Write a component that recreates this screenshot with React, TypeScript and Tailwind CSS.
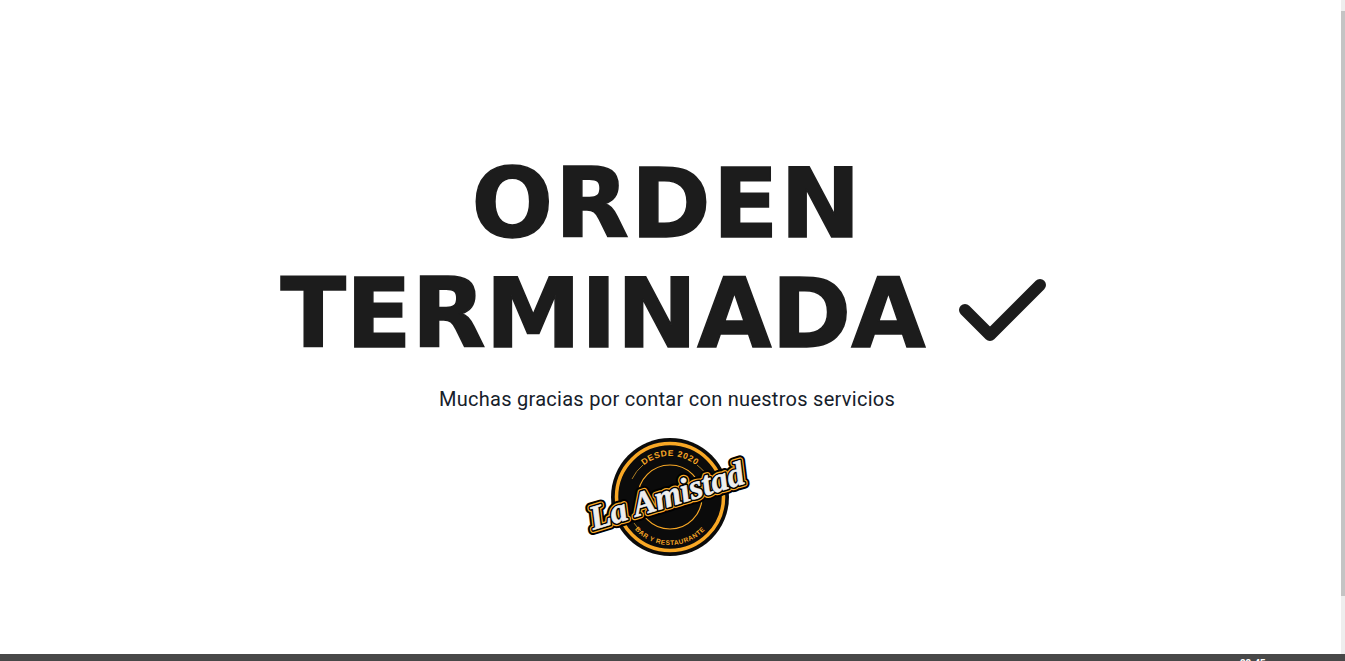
function Check() {
  return (
    <svg width="100" height="76" viewBox="0 0 100 76" className="mt-[5px] shrink-0">
      <path d="M12 31L37 56L87 6" fill="none" stroke="#1c1c1c" strokeWidth="12" strokeLinecap="round" strokeLinejoin="round" />
    </svg>
  );
}

const scriptProps = {
  x: 85,
  y: 72,
};

function Logo() {
  return (
    <svg width="170" height="124" viewBox="0 0 170 124">
      <defs>
        <path id="arcTop" d="M47 62A41 41 0 0 1 129 62" />
        <path id="arcBottom" d="M40 62A48 48 0 0 0 136 62" />
      </defs>
      {/* Badge */}
      <circle cx="88" cy="62" r="59" fill="#0b0b0b" />
      <circle cx="88" cy="62" r="53.5" fill="none" stroke="#f9a825" strokeWidth="3.5" />
      <circle cx="88" cy="62" r="32" fill="none" stroke="#f9a825" strokeWidth="1.2" />
      {/* Rules beside the curved lines */}
      <path d="M50 44A42 42 0 0 1 61 30M115 30A42 42 0 0 1 124 39" fill="none" stroke="#a87a22" strokeWidth="1" />
      <path d="M52 88A44 44 0 0 0 60 97" fill="none" stroke="#a87a22" strokeWidth="1" />
      <text fontFamily="'Liberation Sans', sans-serif" fontSize="8.5" fontWeight="700" fill="#f9a825" letterSpacing="0.6" textAnchor="middle">
        <textPath href="#arcTop" startOffset="50%">DESDE 2020</textPath>
      </text>
      <text fontFamily="'Liberation Sans', sans-serif" fontSize="6.5" fontWeight="700" fill="#f9a825" letterSpacing="0.5" textAnchor="middle">
        <textPath href="#arcBottom" startOffset="50%">BAR Y RESTAURANTE</textPath>
      </text>
      {/* Script name, layered strokes */}
      <g transform="rotate(-17 85 62)" fontFamily="'Liberation Serif', serif" fontStyle="italic" fontWeight="700" fontSize="34" textAnchor="middle" strokeLinejoin="round">
        <text {...scriptProps} fill="#000" stroke="#000" strokeWidth="10">La Amistad</text>
        <text {...scriptProps} fill="#f9a825" stroke="#f9a825" strokeWidth="6">La Amistad</text>
        <text {...scriptProps} fill="#000" stroke="#000" strokeWidth="3.6">La Amistad</text>
        <text {...scriptProps} fill="#eeeeee" stroke="#eeeeee" strokeWidth="0.6">La Amistad</text>
      </g>
    </svg>
  );
}

export default function App() {
  return (
    <div className="flex h-[661px] w-full flex-col overflow-hidden bg-white">
      <div className="flex h-[654px] w-full">
        <main className="flex min-w-0 flex-1 flex-col items-center pt-[149px] pr-[7px]">
          <h1 className="flex flex-col items-center font-['DejaVu_Sans',sans-serif] text-[96px] leading-[110px] font-bold text-[#1c1c1c] [-webkit-text-stroke:1.5px_#1c1c1c]">
            <span className="tracking-[2px]">ORDEN</span>
            <span className="flex items-center gap-[28px]">
              TERMINADA
              <Check />
            </span>
          </h1>
          <p className="mt-[16px] font-['Roboto',sans-serif] text-[20px] leading-[28px] tracking-[0.28px] text-[#16202a]">
            Muchas gracias por contar con nuestros servicios
          </p>
          <div className="mt-[22px]">
            <Logo />
          </div>
        </main>
        {/* Scrollbar */}
        <div className="w-[4px] shrink-0 bg-[#eeeeee] pt-[11px]">
          <div className="h-[585px] bg-[#c4c4c4]" />
        </div>
      </div>
      <footer className="relative h-[7px] overflow-hidden bg-[#484848]">
        <span className="absolute top-[4px] left-[1240px] font-['Liberation_Sans',sans-serif] text-[10px] leading-[12px] font-bold text-white">22:45</span>
      </footer>
    </div>
  );
}
